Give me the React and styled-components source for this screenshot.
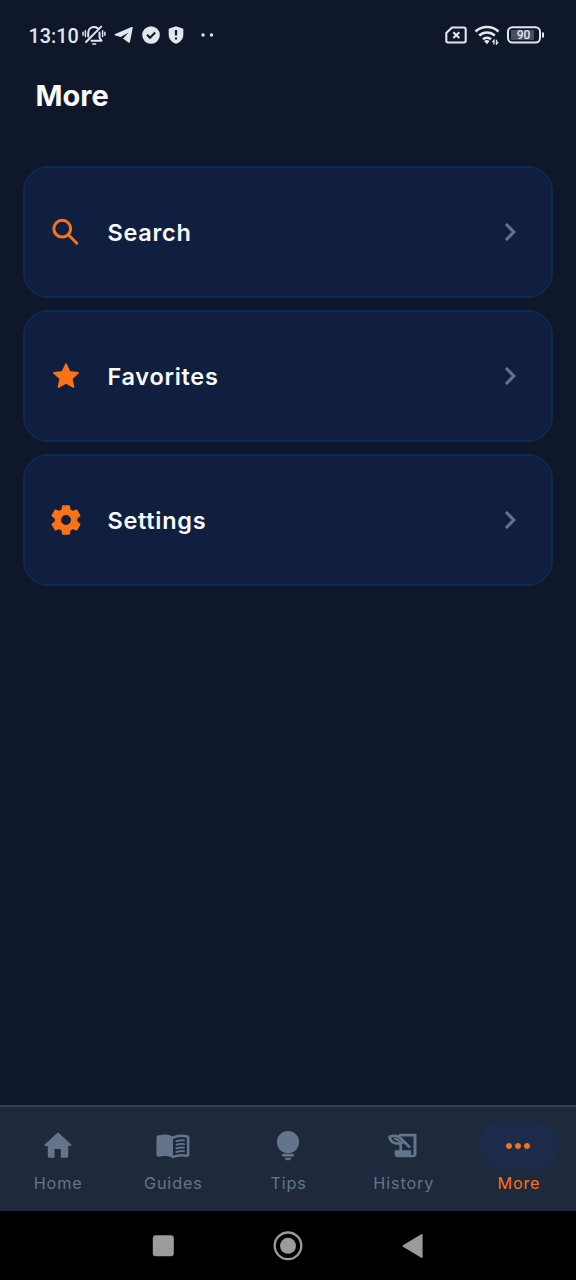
// Libs
import React from "react";
import styled, { createGlobalStyle } from "styled-components";
import { MdChevronRight, MdMoreHoriz } from "react-icons/md";

// Style
const GlobalStyle = createGlobalStyle`
  * {
    box-sizing: border-box;
  }

  body {
    margin: 0;
    background: #0f172a;
    font-family: Inter, sans-serif;
  }
`;

const Screen = styled.div`
  display: flex;
  flex-direction: column;
  width: 576px;
  height: 1280px;
  background: #0f172a;
  overflow: hidden;
`;

const StatusBar = styled.header`
  display: flex;
  justify-content: space-between;
  align-items: center;
  height: 71px;
  padding: 0 31px 0 28.5px;
  color: #e2e6ee;
`;

const StatusGroup = styled.div`
  display: flex;
  align-items: center;
  gap: ${({ $gap }) => $gap}px;

  svg {
    display: block;
    margin-bottom: 1px;
  }
`;

const Clock = styled.span`
  width: 50px;
  font-family: Roboto, sans-serif;
  font-size: 19.8px;
  font-weight: 500;
  line-height: 24px;
  margin-right: -5px;
  padding-top: 2px;
`;

const Title = styled.h1`
  margin: 0;
  padding: 5px 35.5px 0;
  height: 95px;
  font-size: 29px;
  font-weight: 700;
  line-height: 40px;
  color: #f8fafc;
`;

const Menu = styled.main`
  flex: 1;
  display: flex;
  flex-direction: column;
  gap: 12px;
  padding: 0 23px;
`;

const MenuItem = styled.div`
  display: flex;
  align-items: center;
  height: 132px;
  padding: 1px 23px 0 23px;
  border: 2px solid #132850;
  border-radius: 25px;
  background: #101f3f;
`;

const MenuIcon = styled.span`
  display: flex;
  width: 36px;
  margin: 0 23.5px 1px 0;
  color: #f97316;
`;

const MenuLabel = styled.span`
  flex: 1;
  font-size: 23.5px;
  font-weight: 600;
  letter-spacing: 0.7px;
  color: #f8fafc;
`;

const Arrow = styled(MdChevronRight)`
  margin-bottom: 1px;
  color: #64748b;
`;

const TabBar = styled.nav`
  display: flex;
  height: 106px;
  border-top: 2px solid #334155;
  background: #1e293b;
`;

const Tab = styled.div`
  flex: 1;
  display: flex;
  flex-direction: column;
  align-items: center;
  padding: 15px 0 0 1px;
  color: ${({ $active }) => ($active ? "#f97316" : "#64748b")};
`;

const TabIcon = styled.span`
  display: flex;
  align-items: center;
  justify-content: center;
  width: 82px;
  height: 48px;
  padding-right: 1px;
  border-radius: 24px;
  background: ${({ $active }) => ($active ? "#1c2b49" : "transparent")};
`;

const TabLabel = styled.span`
  margin-top: 3px;
  font-size: 16.2px;
  line-height: 20px;
  letter-spacing: 0.85px;
`;

const SystemNav = styled.footer`
  display: flex;
  justify-content: center;
  align-items: center;
  gap: 95px;
  height: 69px;
  padding-right: 1px;
  background: #000;
`;

// Status bar icons
function MutedBell() {
  return (
    <svg width="24" height="22" viewBox="0 0 24 22" fill="none" stroke="currentColor" strokeWidth="2" strokeLinecap="round" strokeLinejoin="round">
      <path d="M4 18 19.200 2.600" />
      <path d="M6.200 12.500V9c0-3.600 2.300-6 5.800-6 1.400 0 2.600.4 3.500 1.100" />
      <path d="M17.500 8.500v5l2 3.300H9.500" />
      <path d="M10.800 20h2.800M1 8.300v3M3.400 6.800v5.600M20.600 6.800v5.600M22.900 8.300v3" strokeWidth="1.500" />
    </svg>
  );
}

function Telegram() {
  return (
    <svg width="20" height="18" viewBox="0 0 20 18" fill="currentColor">
      <path d="M1.200 8 17.500 1c.8-.3 1.400.2 1.200 1.100L16 15.800c-.2.9-1 1.100-1.700.6L9 12.600l5.600-6.200-7.800 4.700-5.500-1.600C.5 9.200.5 8.300 1.200 8Z" />
    </svg>
  );
}

function Verified() {
  return (
    <svg width="18" height="18" viewBox="0 0 18 18">
      <circle cx="9" cy="9" r="8.800" fill="currentColor" />
      <path d="m5 8.800 3 3 5.200-5.300" fill="none" stroke="#0f172a" strokeWidth="2" />
    </svg>
  );
}

function Shield() {
  return (
    <svg width="16" height="18" viewBox="0 0 16 18">
      <path d="M8 .2 15.300 2.800V9c0 4-3.200 7.400-7.300 8.800C3.900 16.400.7 13 .7 9V2.800Z" fill="currentColor" />
      <path d="M8 4v5.500M8 11.400v2.200" stroke="#0f172a" strokeWidth="2.200" />
    </svg>
  );
}

function Dots() {
  return (
    <svg width="22" height="4" viewBox="-8 0 22 4" fill="currentColor">
      <circle cx="3" cy="2" r="1.700" />
      <circle cx="11.500" cy="2" r="1.700" />
    </svg>
  );
}

function NoSim() {
  return (
    <svg width="22" height="18" viewBox="0 0 22 18" fill="none" stroke="currentColor" strokeWidth="2.100">
      <path d="M7 1.500h12a1.700 1.700 0 0 1 1.700 1.700v11.600a1.700 1.700 0 0 1-1.700 1.700H3a1.700 1.700 0 0 1-1.700-1.700V7Z" />
      <path d="m8.300 6.200 6 5.800m0-5.800-6 5.800" />
    </svg>
  );
}

function Wifi() {
  return (
    <svg width="26" height="20" viewBox="0 0 26 20" fill="none" stroke="currentColor" strokeWidth="2.700">
      <path d="M1.500 6.500c6.500-6 16.500-6 23 0" />
      <path d="M5.200 10.500c4.400-4 11.200-4 15.600 0" />
      <path d="M9 14.300c2.300-2 5.700-2 8 0" />
      <path d="m10 16 3 3.200 2.600-3.200c-1.600-1.400-4-1.400-5.600 0Z" fill="currentColor" stroke="none" />
      <path d="M20 19.500v-4.200l-1.600 1.800M22.500 14.800V19l1.800-1.900" strokeWidth="1.300" />
    </svg>
  );
}

function Battery() {
  return (
    <svg width="38" height="18" viewBox="0 0 38 18">
      <rect x="1" y="1.200" width="32" height="15.300" rx="4.500" fill="none" stroke="currentColor" strokeWidth="2" />
      <rect x="4" y="4" width="23" height="10" rx="1" fill="#484e5d" />
      <path d="M36 6.500v5" stroke="currentColor" strokeWidth="2" />
      <text x="16.500" y="13.300" textAnchor="middle" fontFamily="Roboto, sans-serif" fontSize="12" fontWeight="500" fill="currentColor">
        90
      </text>
    </svg>
  );
}

// Menu icons
const Icon = ({ children, ...props }) => (
  <svg width="36" height="36" viewBox="0 0 24 24" fill="currentColor" strokeLinejoin="round" {...props}>
    {children}
  </svg>
);

const SearchIcon = () => (
  <Icon fill="none" stroke="currentColor" strokeWidth="2" strokeLinecap="round">
    <circle cx="9.500" cy="9.800" r="5.600" />
    <path d="m14.400 14.700 4.800 4.800" />
  </Icon>
);

const StarIcon = () => (
  <Icon stroke="currentColor" strokeWidth="1.200">
    <path d="m12 4.200 2.350 5.060 5.650.64-4.200 3.840 1.140 5.560L12 16.500l-4.940 2.800 1.140-5.560L4 9.900l5.650-.64Z" />
  </Icon>
);

const SettingsIcon = () => (
  <Icon>
    <circle cx="12" cy="12" r="5.400" fill="none" stroke="currentColor" strokeWidth="4.200" />
    {[0, 60, 120, 180, 240, 300].map((angle) => (
      <path
        key={angle}
        d="M10 2.700h4l.6 3.500H9.400Z"
        stroke="currentColor"
        strokeWidth="1.200"
        transform={`rotate(${angle} 12 12)`}
      />
    ))}
  </Icon>
);

// Tab icons
const HomeIcon = () => (
  <Icon>
    <path d="M11.300 3.500 3.300 10.800c-.5.500-.2 1.200.4 1.200h1.500v6.900c0 .6.400 1 1 1h3.500V14h4.200v5.900h3.900c.6 0 1-.4 1-1V12h1.500c.6 0 .9-.7.4-1.200l-8-7.300c-.4-.4-1-.4-1.400 0Z" />
  </Icon>
);

const GuidesIcon = () => (
  <Icon>
    <path d="M2.400 4.900C5.400 4.100 9.300 4.200 12 5.800V20c-2.500-1.400-6.500-1.600-9.300-.9-.9.2-1.700-.3-1.700-1.200V6.600c0-.9.500-1.500 1.400-1.700Z" />
    <g fill="none" stroke="currentColor" strokeLinecap="round">
      <path strokeWidth="1.700" d="M12 6.400c2.500-1.400 6-1.500 9-.9.700.1 1.100.5 1.100 1.200v10.900c0 .7-.5 1-1.200.9-3-.6-6.400-.3-8.900.8" />
      <path strokeWidth="1.200" d="M14.200 8.800c1.600-.6 3.400-.7 5.200-.5M14.200 11.200c1.600-.6 3.400-.7 5.200-.5M14.200 13.600c1.600-.6 3.400-.7 5.200-.5M14.200 16c1.600-.6 3.400-.7 5.200-.5" />
    </g>
  </Icon>
);

const TipsIcon = () => (
  <Icon>
    <circle cx="12" cy="9.400" r="7.400" />
    <rect x="8" y="17.100" width="8" height="1.900" rx=".8" />
    <path d="M9.700 19.900h4.600c0 1-1 1.700-2.300 1.700s-2.300-.7-2.300-1.700Z" />
  </Icon>
);

const HistoryIcon = () => (
  <Icon>
    <path d="M9.300 3.800H21v13.400a2.300 2.300 0 0 1-2.300 2.300H8.500c-1.300 0-2.100-.9-2.100-2.200v-2.400h11v2.300c0 .6.300.9.800.9s.8-.3.8-.9V5.700H9.300Z" />
    <g fill="none" stroke="currentColor" strokeWidth="1.800">
      <path d="M10.500 15.500v-4.500M16.700 13 10.500 6.900C8.500 4.900 5 4.900 3 6c.3 2.700 3 4.600 5.300 4.200 1.200-.2 2.100.6 2.200 1.500" />
      <path d="M6 7c1.800.3 3.800 1.700 5.300 3.200l1.500-1.300" strokeWidth="1.400" />
    </g>
  </Icon>
);

const MoreIcon = () => <MdMoreHoriz size={36} />;

const menuItems = [
  { label: "Search", icon: SearchIcon },
  { label: "Favorites", icon: StarIcon },
  { label: "Settings", icon: SettingsIcon },
];

const tabs = [
  { label: "Home", icon: HomeIcon },
  { label: "Guides", icon: GuidesIcon },
  { label: "Tips", icon: TipsIcon },
  { label: "History", icon: HistoryIcon },
  { label: "More", icon: MoreIcon, active: true },
];

export default function App() {
  return (
    <Screen>
      <GlobalStyle />
      <StatusBar>
        <StatusGroup $gap={8}>
          <Clock>13:10</Clock>
          <MutedBell />
          <Telegram />
          <Verified />
          <Shield />
          <Dots />
        </StatusGroup>
        <StatusGroup $gap={7}>
          <NoSim />
          <Wifi />
          <Battery />
        </StatusGroup>
      </StatusBar>
      <Title>More</Title>
      <Menu>
        {menuItems.map(({ label, icon: ItemIcon }) => (
          <MenuItem key={label}>
            <MenuIcon>
              <ItemIcon />
            </MenuIcon>
            <MenuLabel>{label}</MenuLabel>
            <Arrow size={36} />
          </MenuItem>
        ))}
      </Menu>
      <TabBar>
        {tabs.map(({ label, icon: ItemIcon, active }) => (
          <Tab key={label} $active={active}>
            <TabIcon $active={active}>
              <ItemIcon />
            </TabIcon>
            <TabLabel>{label}</TabLabel>
          </Tab>
        ))}
      </TabBar>
      <SystemNav>
        <svg width="30" height="30" viewBox="0 0 30 30" fill="#9b9b9b">
          <rect x="4.800" y="4.300" width="21" height="21" rx="3" />
        </svg>
        <svg width="30" height="30" viewBox="0 0 30 30" fill="#9b9b9b">
          <circle cx="15" cy="14.800" r="13.300" fill="none" stroke="#9b9b9b" strokeWidth="2.300" />
          <circle cx="15" cy="14.800" r="8" />
        </svg>
        <svg width="30" height="30" viewBox="0 0 30 30" fill="#9b9b9b">
          <path d="M5 14.200 23.300 3.200c.7-.4 1.300 0 1.300.8v22c0 .8-.6 1.200-1.300.8L5 15.800c-.6-.4-.6-1.200 0-1.600Z" />
        </svg>
      </SystemNav>
    </Screen>
  );
}
